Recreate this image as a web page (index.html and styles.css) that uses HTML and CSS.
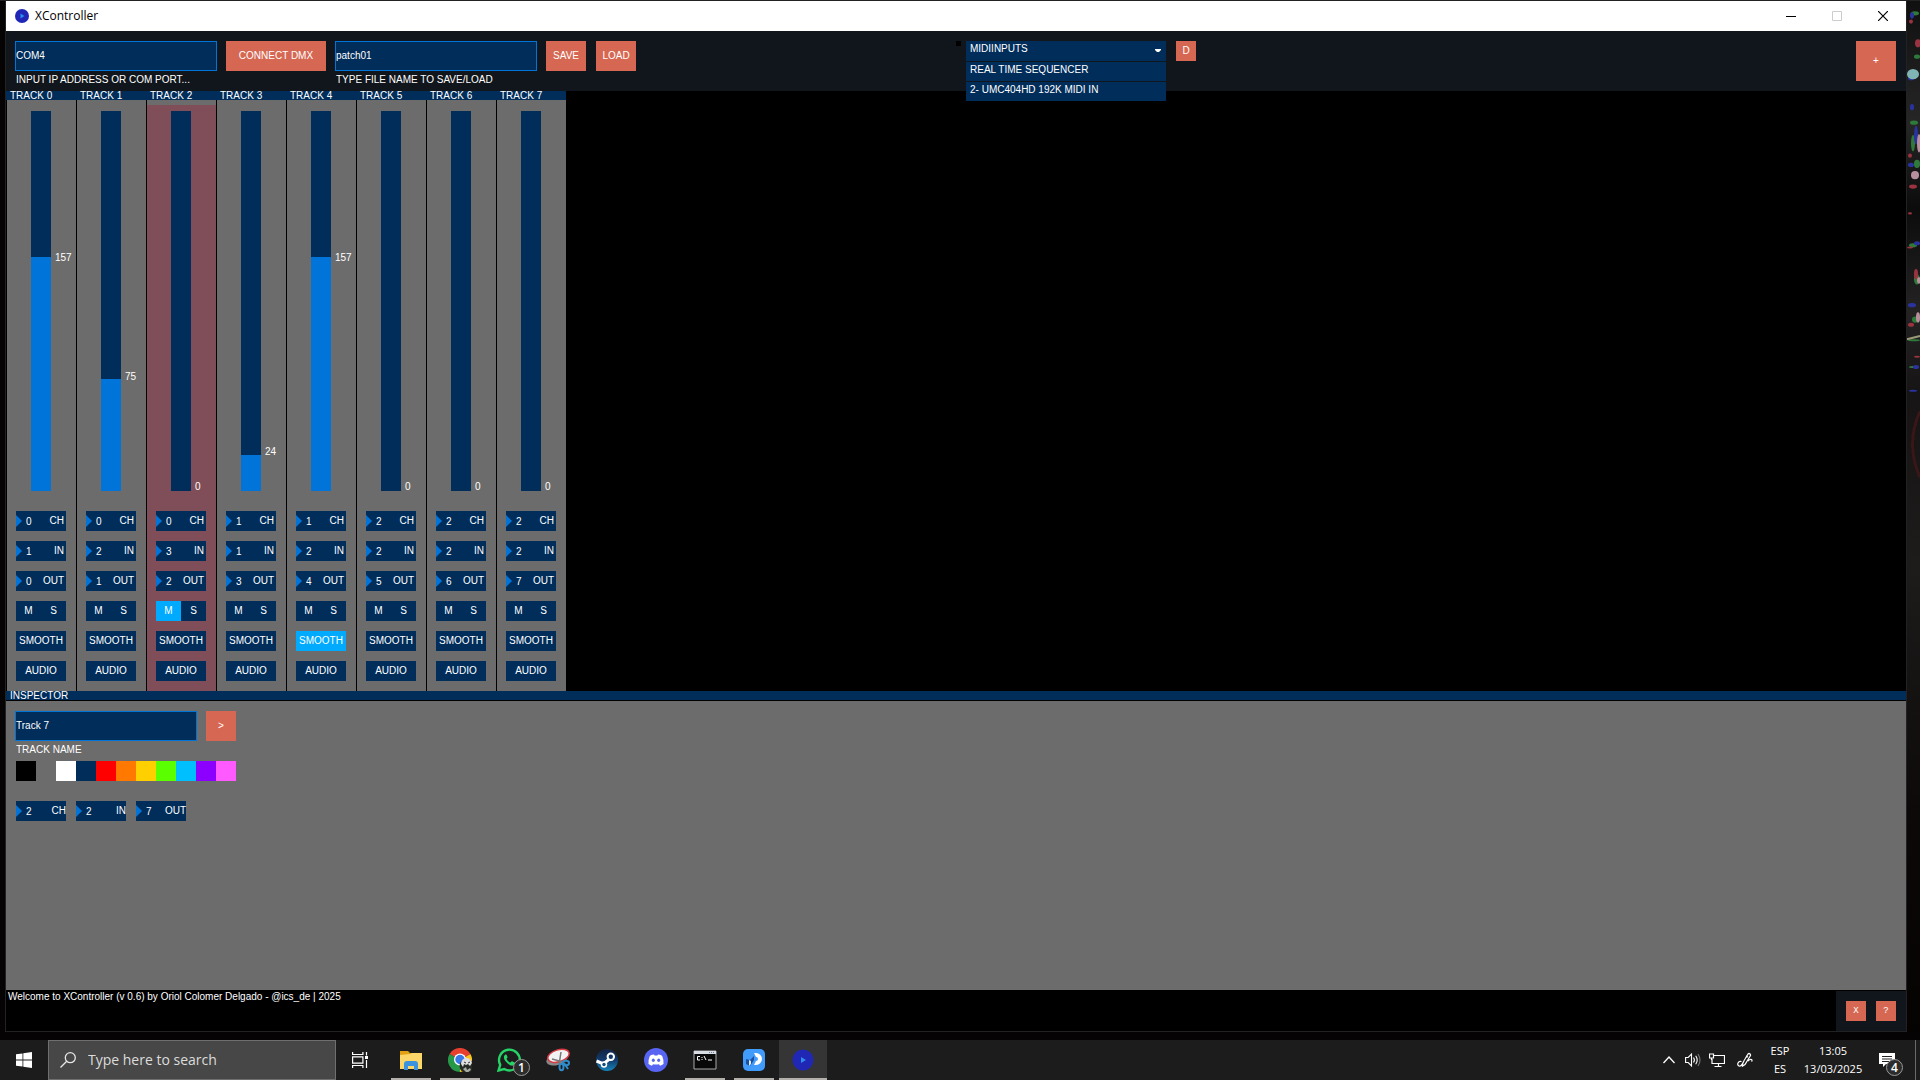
FILE: index.html
```html
<!DOCTYPE html>
<html lang="en">
<head>
<meta charset="utf-8">
<title>XController</title>
<link rel="stylesheet" href="styles.css">
</head>
<body>
<main class="desktop">
  <section class="window">
    <header class="titlebar">
      <svg class="app-icon" viewBox="0 0 14 14"><circle cx="7" cy="7" r="7" fill="#1f27b4"/><path d="M5.500 4.500l4 2.500-4 2.500z" fill="#2f8df0"/></svg>
      <h1 class="window-title">XController</h1>
      <div class="window-buttons">
        <button class="window-button" aria-label="Minimize"><svg viewBox="0 0 10 10"><path d="M0 5.500h10" stroke="#000"/></svg></button>
        <button class="window-button" aria-label="Maximize" disabled><svg viewBox="0 0 10 10"><path d="M.5.5h9v9h-9z" fill="none" stroke="#ccc"/></svg></button>
        <button class="window-button" aria-label="Close"><svg viewBox="0 0 10 10"><path d="M0 0l10 10M10 0L0 10" stroke="#000" stroke-width="1.200"/></svg></button>
      </div>
    </header>

    <div class="toolbar">
      <div class="field">
        <input class="text-input" id="port" value="COM4">
        <label class="field-label" for="port">INPUT IP ADDRESS OR COM PORT...</label>
      </div>
      <button class="action connect">CONNECT DMX</button>
      <div class="field">
        <input class="text-input" id="file" value="patch01">
        <label class="field-label" for="file">TYPE FILE NAME TO SAVE/LOAD</label>
      </div>
      <button class="action medium">SAVE</button>
      <button class="action medium">LOAD</button>
      <div class="midi">
        <span class="midi-led"></span>
        <div class="dropdown">
          <select class="dropdown-select" aria-label="MIDI inputs"><option>MIDIINPUTS</option></select>
          <svg class="dropdown-arrow" viewBox="0 0 6 3"><path d="M0 0h6v1L4 3H2L0 1z" fill="#fff"/></svg>
          <ul class="dropdown-list">
            <li><button class="dropdown-item">REAL TIME SEQUENCER</button></li>
            <li><button class="dropdown-item">2- UMC404HD 192K MIDI IN</button></li>
          </ul>
        </div>
        <button class="action small">D</button>
      </div>
      <button class="action add">+</button>
    </div>

    <div class="tracks" id="tracks"></div>

    <section class="inspector">
      <h2 class="panel-title">INSPECTOR</h2>
      <div class="inspector-body">
        <div class="name-row">
          <div class="field name-field">
            <input class="text-input" id="track-name" value="Track 7">
            <label class="field-label" for="track-name">TRACK NAME</label>
          </div>
          <button class="action next">&gt;</button>
        </div>
        <div class="swatches">
          <button class="swatch black" aria-label="Black"></button>
          <button class="swatch grey" aria-label="Grey"></button>
          <button class="swatch white" aria-label="White"></button>
          <button class="swatch navy" aria-label="Navy"></button>
          <button class="swatch red" aria-label="Red"></button>
          <button class="swatch orange" aria-label="Orange"></button>
          <button class="swatch yellow" aria-label="Yellow"></button>
          <button class="swatch green" aria-label="Green"></button>
          <button class="swatch cyan" aria-label="Cyan"></button>
          <button class="swatch violet" aria-label="Violet"></button>
          <button class="swatch pink" aria-label="Pink"></button>
        </div>
        <div class="inspector-numbers">
          <div class="numberbox flush"><input class="number" id="sel-ch" value="2"><label for="sel-ch">CH</label></div>
          <div class="numberbox flush"><input class="number" id="sel-in" value="2"><label for="sel-in">IN</label></div>
          <div class="numberbox flush"><input class="number" id="sel-out" value="7"><label for="sel-out">OUT</label></div>
        </div>
      </div>
    </section>

    <footer class="statusbar">
      <p class="status">Welcome to XController (v 0.6) by Oriol Colomer Delgado - @ics_de | 2025</p>
      <div class="status-actions">
        <button class="action small pixel">X</button>
        <button class="action small pixel">?</button>
      </div>
    </footer>
  </section>

  <svg class="wallpaper" viewBox="0 0 13 1000" preserveAspectRatio="none" aria-hidden="true">
    <defs>
      <linearGradient id="shade" x1="0" y1="0" x2="0" y2="1"><stop offset="0" stop-color="#101010"/><stop offset=".12" stop-color="#262626"/><stop offset=".2" stop-color="#0c0c0c"/><stop offset=".3" stop-color="#242222"/><stop offset=".38" stop-color="#161414"/><stop offset=".55" stop-color="#1d1c1b"/><stop offset=".8" stop-color="#0c0808"/><stop offset="1" stop-color="#050202"/></linearGradient>
      <filter id="soft"><feGaussianBlur stdDeviation=".7"/></filter>
    </defs>
    <path d="M0 0h13v1000H0z" fill="url(#shade)"/>
    <g filter="url(#soft)">
      <g fill="#2f7a3a"><ellipse cx="8" cy="12" rx="4" ry="2"/><ellipse cx="10" cy="54" rx="3" ry="2"/><ellipse cx="7" cy="118" rx="4" ry="2"/><ellipse cx="6" cy="138" rx="2" ry="8"/><ellipse cx="10" cy="158" rx="3" ry="4"/><ellipse cx="6" cy="237" rx="4" ry="2"/><ellipse cx="10" cy="270" rx="3" ry="5"/><ellipse cx="8" cy="309" rx="3" ry="3"/><ellipse cx="7" cy="329" rx="6" ry="1"/><ellipse cx="6" cy="355" rx="4" ry="1"/></g>
      <g fill="#2a33a0"><ellipse cx="5" cy="14" rx="2" ry="3"/><ellipse cx="4" cy="75" rx="3" ry="2"/><ellipse cx="5" cy="103" rx="2" ry="3"/><ellipse cx="9" cy="130" rx="2" ry="9"/><ellipse cx="4" cy="159" rx="3" ry="2"/><ellipse cx="10" cy="235" rx="3" ry="2"/><ellipse cx="5" cy="295" rx="4" ry="2"/><ellipse cx="9" cy="355" rx="3" ry="2"/><ellipse cx="6" cy="378" rx="4" ry="1"/></g>
      <g fill="#9a3340"><ellipse cx="4" cy="20" rx="2" ry="2"/><ellipse cx="11" cy="41" rx="3" ry="4"/><ellipse cx="3" cy="150" rx="2" ry="2"/><ellipse cx="6" cy="180" rx="4" ry="2"/><ellipse cx="3" cy="206" rx="2" ry="1"/><ellipse cx="3" cy="239" rx="3" ry="1"/><ellipse cx="9" cy="265" rx="2" ry="5"/><ellipse cx="4" cy="314" rx="3" ry="2"/><ellipse cx="10" cy="345" rx="3" ry="1"/></g>
      <g fill="#b98f9e"><ellipse cx="12" cy="138" rx="2" ry="9"/><ellipse cx="8" cy="169" rx="4" ry="4"/><ellipse cx="11" cy="307" rx="2" ry="5"/><ellipse cx="12" cy="271" rx="2" ry="3"/></g>
      <ellipse cx="6" cy="71" rx="6" ry="5" fill="#7fb3b4"/><path d="M0 328l13-3" stroke="#9a9a78" stroke-width="2"/>
      <path d="M13 398Q-2 430 13 462" fill="none" stroke="#3a1518" stroke-width="3"/>
    </g>
  </svg>
</main>

<nav class="taskbar">
  <button class="task start" aria-label="Start"><svg viewBox="0 0 16 16"><path d="M0 2.300L6.500 1.400v6.200H0zM7.300 1.300L16 0v7.600H7.300zM0 8.400h6.500v6.200L0 13.700zM7.300 8.400H16V16l-8.700-1.200z" fill="#fff"/></svg></button>
  <label class="search">
    <svg viewBox="0 0 16 16"><g fill="none" stroke="#e6e6e6" stroke-width="1.300"><circle cx="10.300" cy="5.700" r="5"/><path d="M6.700 9.300L.5 15.500"/></g></svg>
    <input class="search-input" type="search" placeholder="Type here to search">
  </label>
  <button class="task view" aria-label="Task view"><svg viewBox="0 0 16 16"><path d="M.6 0v2.500h10.300V0M.6 16v-2.500h10.300V16M.6 4.800h10.300v6.400H.6zM14.500 0v3.500M14.500 8v8" fill="none" stroke="#fff" stroke-width="1.200"/><path d="M13 4h3v3h-3z" fill="#fff"/></svg></button>
  <div class="apps">
    <button class="task open" aria-label="File Explorer"><svg viewBox="0 0 24 24"><path d="M1 3h8l2 2h10v4H1z" fill="#e2a012"/><path d="M1 7l10-1 2-1h10v16H1z" fill="#fcd668"/><path d="M5 22v-6q0-3 3-3h8q3 0 3 3v6h-4v-4H9v4z" fill="#3a93dc"/></svg></button>
    <button class="task open" aria-label="Chrome"><svg viewBox="0 0 24 24"><path d="M12 12L1.600 6A12 12 0 0 1 22.400 6z" fill="#e8402f"/><path d="M12 12L22.400 6A12 12 0 0 1 12 24z" fill="#fbc521"/><path d="M12 12V24A12 12 0 0 1 1.600 6z" fill="#279847"/><circle cx="12" cy="11.500" r="6" fill="#fff"/><circle cx="12" cy="11.500" r="4.700" fill="#3979e8"/><circle cx="18.500" cy="18" r="7" fill="#252a25"/><path d="M13 16q0-5 5-6 5 0 6 5l-2 3-2-2-2 1-2-1-1 3z" fill="#dedede"/><path d="M16 14l2 1M20 15l2-1" stroke="#333"/><path d="M15 21l3-2 1 3 3-2 1 2-4 3z" fill="#a8aca4"/></svg></button>
    <button class="task" aria-label="WhatsApp"><svg viewBox="0 0 24 24"><path d="M1.500 22.500l1.700-5.700A10.400 10.400 0 1 1 7.200 21z" fill="none" stroke="#25d366" stroke-width="2.400"/><path d="M8.500 6.500C6 8 6.500 11 9.500 14.300s6.300 4.400 8 2.200c.7-1 .5-1.800-.2-2.200l-2.200-1c-.7-.3-1.400 1.500-2.200 1.100-1.600-.8-2.600-1.900-3.300-3.300-.3-.7 1.100-1.100.9-2L9.700 7q-.4-.8-1.200-.5z" fill="#25d366"/></svg><span class="count">1</span></button>
    <button class="task" aria-label="Snipping Tool"><svg viewBox="0 0 24 24"><ellipse cx="11" cy="11" rx="11" ry="6" transform="rotate(-17 11 11)" fill="#888"/><ellipse cx="12.500" cy="8" rx="11" ry="6" transform="rotate(-17 12 8)" fill="#f2f2f2" stroke="#d43b42" stroke-width="1.500"/><path d="M6 11l11 3M15 4l-2 13" stroke="#777" stroke-width="1.500"/><g fill="none" stroke="#2f8cc9" stroke-width="2"><ellipse cx="20" cy="15" rx="3" ry="2.300"/><ellipse cx="15.500" cy="19" rx="2" ry="3.200"/><path d="M18 15l4 6"/></g></svg></button>
    <button class="task" aria-label="Steam"><svg viewBox="0 0 24 24"><defs><linearGradient id="steam" x1="0" y1="0" x2="0" y2="1"><stop offset="0" stop-color="#142344"/><stop offset=".5" stop-color="#123a6b"/><stop offset="1" stop-color="#1586bd"/></linearGradient></defs><circle cx="12" cy="12" r="11" fill="url(#steam)"/><path d="M1.500 13l7 3 7-6" stroke="#fff" stroke-width="3" fill="none"/><circle cx="9" cy="16.500" r="3.200" fill="#fff"/><circle cx="9" cy="16.500" r="1.700" fill="#124a7c"/><circle cx="15.800" cy="8.800" r="3.200" fill="#123763" stroke="#fff" stroke-width="2"/></svg></button>
    <button class="task" aria-label="Discord"><svg viewBox="0 0 24 24"><circle cx="12" cy="12" r="12" fill="#5865f2"/><path d="M8.200 6.800L10 6.500l.5 1h3l.5-1 1.800.3q1.700.4 2.500 1.500 1.600 3.700 1.200 7.700-1.600 1.400-3.500 1.700l-1-1.500q-3 .7-6 0l-1 1.500q-1.900-.3-3.500-1.700-.4-4 1.200-7.700.8-1.100 2.500-1.500z" fill="#fff"/><ellipse cx="9.300" cy="12.300" rx="1.500" ry="1.800" fill="#5865f2"/><ellipse cx="14.700" cy="12.300" rx="1.500" ry="1.800" fill="#5865f2"/></svg></button>
    <button class="task open" aria-label="Command Prompt"><svg viewBox="0 0 24 24"><path d="M1 3h22v18H1z" fill="#080808" stroke="#a8a8a8"/><path d="M1 3h22v3H1z" fill="#d8dde4"/><path d="M16 4.500h5" stroke="#6e7d92" stroke-dasharray="1 1"/><path d="M7 8.500H4.500v3.500H7M9 9v1M9 11v1M11 8l2 4M15 12h4" fill="none" stroke="#fff"/></svg></button>
    <button class="task open" aria-label="Processing"><svg viewBox="0 0 24 24"><rect x="1" y="1" width="22" height="22" rx="5" fill="#409bfa"/><path d="M12 5h2a6 6 0 0 1 0 12h-2l2-4a2 2 0 0 0 0-4z" fill="#fff"/><path d="M4 11l4 1v6l-4-2z" fill="#1c4f9e"/><path d="M8 12l4-4v4l-4 6z" fill="#1c4f9e"/><path d="M7 12l2 1v3l-2 2z" fill="#d9edff"/></svg></button>
    <button class="task open active" aria-label="XController"><svg viewBox="0 0 24 24"><circle cx="12" cy="12" r="10.500" fill="#1f27b4"/><path d="M10 9l5 3-5 3z" fill="#2f8df0"/></svg></button>
  </div>
  <div class="tray">
    <button class="tray-icon" aria-label="Hidden icons"><svg viewBox="0 0 16 16"><path d="M2.500 11L8 5l5.500 6" fill="none" stroke="#fff" stroke-width="1.300"/></svg></button>
    <button class="tray-icon" aria-label="Volume"><svg viewBox="0 0 16 16"><g fill="none" stroke="#fff" stroke-width="1.100"><path d="M.6 5.500h2.600l3.300-3.300v11.600L3.200 10.500H.6zM8.500 5.500q1.800 2.500 0 5M10.700 3.700q3 4.300 0 8.600"/><path d="M13 2q4 6 0 12" stroke="#777"/></g></svg></button>
    <button class="tray-icon" aria-label="Network"><svg viewBox="0 0 16 16"><path d="M5 3.500h10.500v8H3V7M9.500 11.500v3M5.500 14.500h7M.5 2h4v4h-4zM2.500 6v2" fill="none" stroke="#fff" stroke-width="1.200"/></svg></button>
    <button class="tray-icon pen" aria-label="Windows Ink"><svg viewBox="0 0 16 16"><path d="M4.500 9.500C1 8.500-.5 13 2 14c3 1 4-4 6-7l3-5q1-1 2 0t.2 2L8 12.500 5.500 14l.3-3M9 4l2 1M11 9c3-3 5-1 3.500.5" fill="none" stroke="#fff" stroke-width="1.200"/></svg></button>
    <div class="tray-text language"><span>ESP</span><span>ES</span></div>
    <div class="tray-text clock"><time>13:05</time><time>13/03/2025</time></div>
    <button class="notifications" aria-label="Notifications"><svg viewBox="0 0 16 16"><path d="M0 1h16v11H7l-3 3v-3H0z" fill="#fff"/><path d="M3 4.500h10M3 7h10M3 9.500h7" stroke="#222"/></svg><span class="count">4</span></button>
    <span class="show-desktop"></span>
  </div>
</nav>
<script src="tracks.js"></script>
</body>
</html>
```
FILE: styles.css
```css
:root {
  --navy: #002d5a;
  --blue: #0074d9;
  --active: #00aaff;
  --coral: #d66853;
  --grey: #6c6c6c;
  --panel: #11161c;
  --ui: "Liberation Sans", Arial, sans-serif;
  --system: "Open Sans", "Noto Sans", sans-serif;
}

* { box-sizing: border-box; }

body {
  margin: 0;
  min-height: 100vh;
  display: flex;
  flex-direction: column;
  background: #000;
  color: #fff;
  font: 10px/10px var(--ui);
}

button, input, select {
  margin: 0;
  padding: 0;
  border: 0;
  border-radius: 0;
  background: none;
  color: inherit;
  font: inherit;
  outline: 0;
}

h1, h2, p, ul { margin: 0; padding: 0; font: inherit; list-style: none; }
svg { display: block; }

.desktop {
  flex: 1;
  display: flex;
  padding: 1px 0 8px 5px;
  background: linear-gradient(#222 1px, #050303 1px);
}

.wallpaper { flex: none; width: 13px; }

.window {
  flex: 1;
  min-width: 0;
  display: flex;
  flex-direction: column;
  background: #000;
  border: solid #222;
  border-width: 0 1px 1px;
}

/* Title bar */
.titlebar {
  display: flex;
  align-items: center;
  height: 30px;
  padding-left: 9px;
  background: #fff;
  color: #000;
}
.app-icon { width: 14px; height: 14px; }
.window-title { flex: 1; padding-left: 6px; font: 12px/16px var(--system); }
.window-buttons { display: flex; }
.window-button { display: flex; justify-content: center; align-items: center; width: 46px; height: 30px; }
.window-button svg { width: 10px; height: 10px; }

/* Toolbar */
.toolbar {
  display: flex;
  align-items: flex-start;
  height: 60px;
  padding: 10px 10px 0 9px;
  background: var(--panel);
}
.field { display: flex; flex-direction: column; width: 202px; margin-right: 9px; }
.text-input {
  width: 100%;
  height: 30px;
  padding-bottom: 2px;
  background: var(--navy);
  border: 1px solid var(--blue);
}
.field-label { padding: 4px 0 0 1px; }
.action { height: 30px; background: var(--coral); color: #fff; text-align: center; }
.connect { width: 100px; margin-right: 9px; }
.medium { width: 40px; margin-right: 10px; }
.small { width: 20px; height: 20px; }
.add { width: 40px; height: 40px; margin-left: auto; }
.pixel { font: 9px/10px "Liberation Mono", monospace; }

.midi { display: flex; align-items: flex-start; margin-left: 310px; }
.midi-led { width: 5px; height: 5px; margin-right: 5px; background: #000; }
.dropdown { position: relative; width: 200px; margin-right: 10px; }
.dropdown-select {
  appearance: none;
  display: block;
  width: 100%;
  height: 20px;
  padding: 0 4px 5px;
  background: var(--navy);
}
.dropdown-arrow { position: absolute; top: 8px; right: 5px; width: 6px; height: 3px; }
.dropdown-list { position: absolute; z-index: 1; top: 20px; left: 0; width: 100%; }
.dropdown-list li { padding-top: 1px; background: var(--panel); }
.dropdown-item {
  display: block;
  width: 100%;
  height: 19px;
  padding: 0 4px 4px;
  background: var(--navy);
  text-align: left;
}

/* Tracks */
.tracks { display: flex; }
.track { width: 70px; }
.panel-title { height: 9px; padding-left: 4px; background: var(--navy); line-height: 9px; }
.track-body {
  display: flex;
  flex-direction: column;
  gap: 10px;
  padding: 11px 10px 10px 9px;
  border-left: 1px solid #000;
  background: var(--grey);
}
.track.muted .track-body { background: linear-gradient(var(--grey) 5px, #804e58 5px); }
.fader { position: relative; width: 20px; height: 380px; margin: 0 auto 10px; }
.fader-input {
  appearance: none;
  display: block;
  width: 20px;
  height: 380px;
  writing-mode: vertical-lr;
  direction: rtl;
  background: linear-gradient(to top, var(--blue) var(--level), var(--navy) var(--level));
}
.fader-input::-webkit-slider-thumb { appearance: none; width: 20px; height: 1px; background: none; }
.fader-value { position: absolute; left: 24px; bottom: calc(var(--level) * 0.980 - 1px); }

.numberbox {
  display: flex;
  align-items: center;
  width: 50px;
  height: 20px;
  padding-right: 2px;
  background: var(--navy);
}
.numberbox::before {
  content: "";
  width: 6px;
  height: 12px;
  background: var(--blue);
  clip-path: polygon(0 0, 100% 50%, 0 100%);
}
.numberbox.flush { padding-right: 0; }
.number { flex: 1; width: 0; padding-left: 4px; }
.toggle { height: 20px; background: var(--navy); text-align: center; }
.toggle.on { background: var(--active); }
.toggle-pair { display: grid; grid-template-columns: 1fr 1fr; }

/* Inspector */
.inspector { flex: 1; display: flex; flex-direction: column; }
.inspector-body { flex: 1; margin-top: 1px; padding: 10px 9px; background: var(--grey); }
.name-row { display: flex; align-items: flex-start; }
.name-field { width: 182px; }
.next { width: 30px; }
.swatches { display: flex; padding: 6px 0 20px 1px; }
.swatch { width: 20px; height: 20px; }
.black { background: #000; }
.grey { background: var(--grey); }
.white { background: #fff; }
.navy { background: var(--navy); }
.red { background: #f00; }
.orange { background: #ff7800; }
.yellow { background: #ffd000; }
.green { background: #5aff00; }
.cyan { background: #00bfff; }
.violet { background: #8c00ff; }
.pink { background: #ff5aff; }
.inspector-numbers { display: flex; gap: 10px; padding-left: 1px; }

/* Status bar */
.statusbar { display: flex; justify-content: space-between; height: 41px; }
.status { padding: 2px; }
.status-actions { display: flex; gap: 10px; margin-top: 1px; padding: 10px; background: var(--panel); }

/* Taskbar */
.taskbar { display: flex; height: 40px; background: #1c1c1c; font-family: var(--system); }
.task {
  position: relative;
  display: flex;
  justify-content: center;
  align-items: center;
  width: 48px;
  height: 40px;
}
.task svg { width: 24px; height: 24px; }
.start svg, .view svg { width: 16px; height: 16px; }
.search {
  display: flex;
  align-items: center;
  gap: 12px;
  width: 288px;
  padding: 0 11px;
  background: #474747;
  border: 1px solid #6f6f6f;
}
.search svg { width: 16px; height: 16px; }
.search-input { flex: 1; min-width: 0; font: 14px/20px var(--system); }
.search-input::placeholder { color: #dcdcdc; opacity: 1; }
.apps { display: flex; gap: 1px; margin-left: 3px; }
.task.open::after {
  content: "";
  position: absolute;
  bottom: 0;
  left: 4px;
  right: 4px;
  height: 2px;
  background: #b3afab;
}
.task.active { background: #353535; }
.task.active::after { left: 0; right: 0; }
.count {
  position: absolute;
  right: 3px;
  bottom: 4px;
  width: 17px;
  height: 17px;
  border: 1px solid #999;
  border-radius: 50%;
  background: #2c2c2c;
  font: 600 12px/15px var(--system);
  text-align: center;
}

.tray { display: flex; align-items: center; margin-left: auto; }
.tray-icon { display: flex; justify-content: center; width: 24px; }
.tray-icon svg { width: 16px; height: 16px; }
.pen { width: 32px; }
.tray-text { display: flex; flex-direction: column; align-items: center; font-size: 11px; line-height: 18px; }
.language { width: 38px; }
.clock { width: 68px; }
.notifications { position: relative; width: 48px; height: 40px; padding-left: 12px; }
.notifications svg { width: 16px; height: 16px; }
.notifications .count { right: 12px; bottom: 4px; }
.show-desktop { width: 5px; height: 40px; border-left: 1px solid #6a6a6a; }
```
FILE: tracks.js
```js
const tracks = [
  { level: 157, ch: 0, in: 1 },
  { level: 75, ch: 0, in: 2 },
  { level: 0, ch: 0, in: 3, muted: true },
  { level: 24, ch: 1, in: 1 },
  { level: 157, ch: 1, in: 2, smooth: true },
  { level: 0, ch: 2, in: 2 },
  { level: 0, ch: 2, in: 2 },
  { level: 0, ch: 2, in: 2 }
];

const numberBox = (id, value, label) =>
  `<div class="numberbox"><input class="number" id="${id}" value="${value}"><label for="${id}">${label}</label></div>`;

document.getElementById("tracks").innerHTML = tracks.map((t, i) => `
  <section class="track ${t.muted ? "muted" : ""}">
    <h2 class="panel-title">TRACK ${i}</h2>
    <div class="track-body">
      <div class="fader" style="--level: ${t.level / 2.55}%">
        <input class="fader-input" type="range" min="0" max="255" value="${t.level}" aria-label="Track ${i} level">
        <output class="fader-value">${t.level}</output>
      </div>
      ${numberBox(`ch${i}`, t.ch, "CH")}
      ${numberBox(`in${i}`, t.in, "IN")}
      ${numberBox(`out${i}`, i, "OUT")}
      <div class="toggle-pair">
        <button class="toggle ${t.muted ? "on" : ""}">M</button>
        <button class="toggle">S</button>
      </div>
      <button class="toggle ${t.smooth ? "on" : ""}">SMOOTH</button>
      <button class="toggle">AUDIO</button>
    </div>
  </section>`).join("");
```
